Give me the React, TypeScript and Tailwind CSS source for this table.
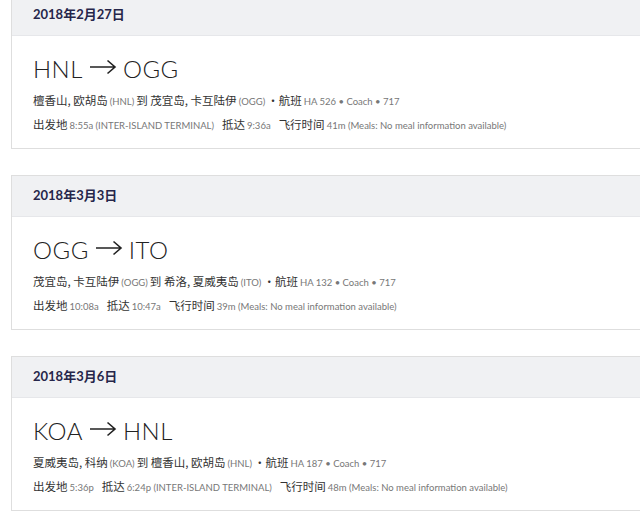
const flights = [
  {
    date: "2018年2月27日",
    from: "HNL",
    to: "OGG",
    fromName: "檀香山, 欧胡岛",
    toName: "茂宜岛, 卡互陆伊",
    flight: "HA 526",
    depart: "8:55a",
    departNote: "(INTER-ISLAND TERMINAL)",
    arrive: "9:36a",
    arriveNote: "",
    duration: "41m",
  },
  {
    date: "2018年3月3日",
    from: "OGG",
    to: "ITO",
    fromName: "茂宜岛, 卡互陆伊",
    toName: "希洛, 夏威夷岛",
    flight: "HA 132",
    depart: "10:08a",
    departNote: "",
    arrive: "10:47a",
    arriveNote: "",
    duration: "39m",
  },
  {
    date: "2018年3月6日",
    from: "KOA",
    to: "HNL",
    fromName: "夏威夷岛, 科纳",
    toName: "檀香山, 欧胡岛",
    flight: "HA 187",
    depart: "5:36p",
    departNote: "",
    arrive: "6:24p",
    arriveNote: "(INTER-ISLAND TERMINAL)",
    duration: "48m",
  },
];

const cjk = "font-['Noto_Sans_CJK_SC',sans-serif]";
const latin = "font-['Lato','Noto_Sans_CJK_SC',sans-serif]";

function Small({ children }: { children: React.ReactNode }) {
  return (
    <span className={`${latin} text-[9.5px] leading-[24px] text-[#777] mx-[2px]`}>
      {children}
    </span>
  );
}

function Arrow() {
  return (
    <svg width="28" height="16" viewBox="0 0 28 16" className="mx-[6px] mb-[4px]">
      <path d="M1 8 H26 M18.5 1.5 L26 8 L18.5 14.5" fill="none" stroke="#222" strokeWidth="1.6" />
    </svg>
  );
}

function FlightCard({ f }: { f: (typeof flights)[number] }) {
  return (
    <div className="w-[680px] border border-[#dedede] mb-[26px] first:-mt-[6px]">
      <div className="h-[41px] bg-[#f0f1f3] border-b border-[#e6e7ea] flex items-center pl-[21px]">
        <span className={`${latin} font-bold text-[13px] text-[#26264a]`}>{f.date}</span>
      </div>
      <div className="pl-[21px] pt-[19px] pb-[12px] bg-white">
        <div className={`${latin} font-light text-[24px] h-[28px] leading-[28px] text-[#222] tracking-[0.5px] flex items-center`}>
          <span>{f.from}</span>
          <Arrow />
          <span>{f.to}</span>
        </div>
        <div className={`${cjk} text-[11.5px] h-[24px] leading-[24px] text-[#333] mt-[5px] whitespace-nowrap`}>
          {f.fromName}
          <Small>({f.from})</Small>到 {f.toName}
          <Small>({f.to})</Small>•航班<Small>{f.flight} • Coach • 717</Small>
        </div>
        <div className={`${cjk} text-[11.5px] h-[24px] leading-[24px] text-[#333] whitespace-nowrap`}>
          出发地<Small>{f.depart}{f.departNote ? " " + f.departNote : ""}</Small>
          <span className="ml-[6px]">抵达</span>
          <Small>{f.arrive}{f.arriveNote ? " " + f.arriveNote : ""}</Small>
          <span className="ml-[6px]">飞行时间</span>
          <Small>{f.duration} (Meals: No meal information available)</Small>
        </div>
      </div>
    </div>
  );
}

export default function App() {
  return (
    <div className="w-[640px] h-[516px] overflow-hidden bg-white pl-[11px]">
      {flights.map((f) => (
        <FlightCard key={f.date} f={f} />
      ))}
    </div>
  );
}
